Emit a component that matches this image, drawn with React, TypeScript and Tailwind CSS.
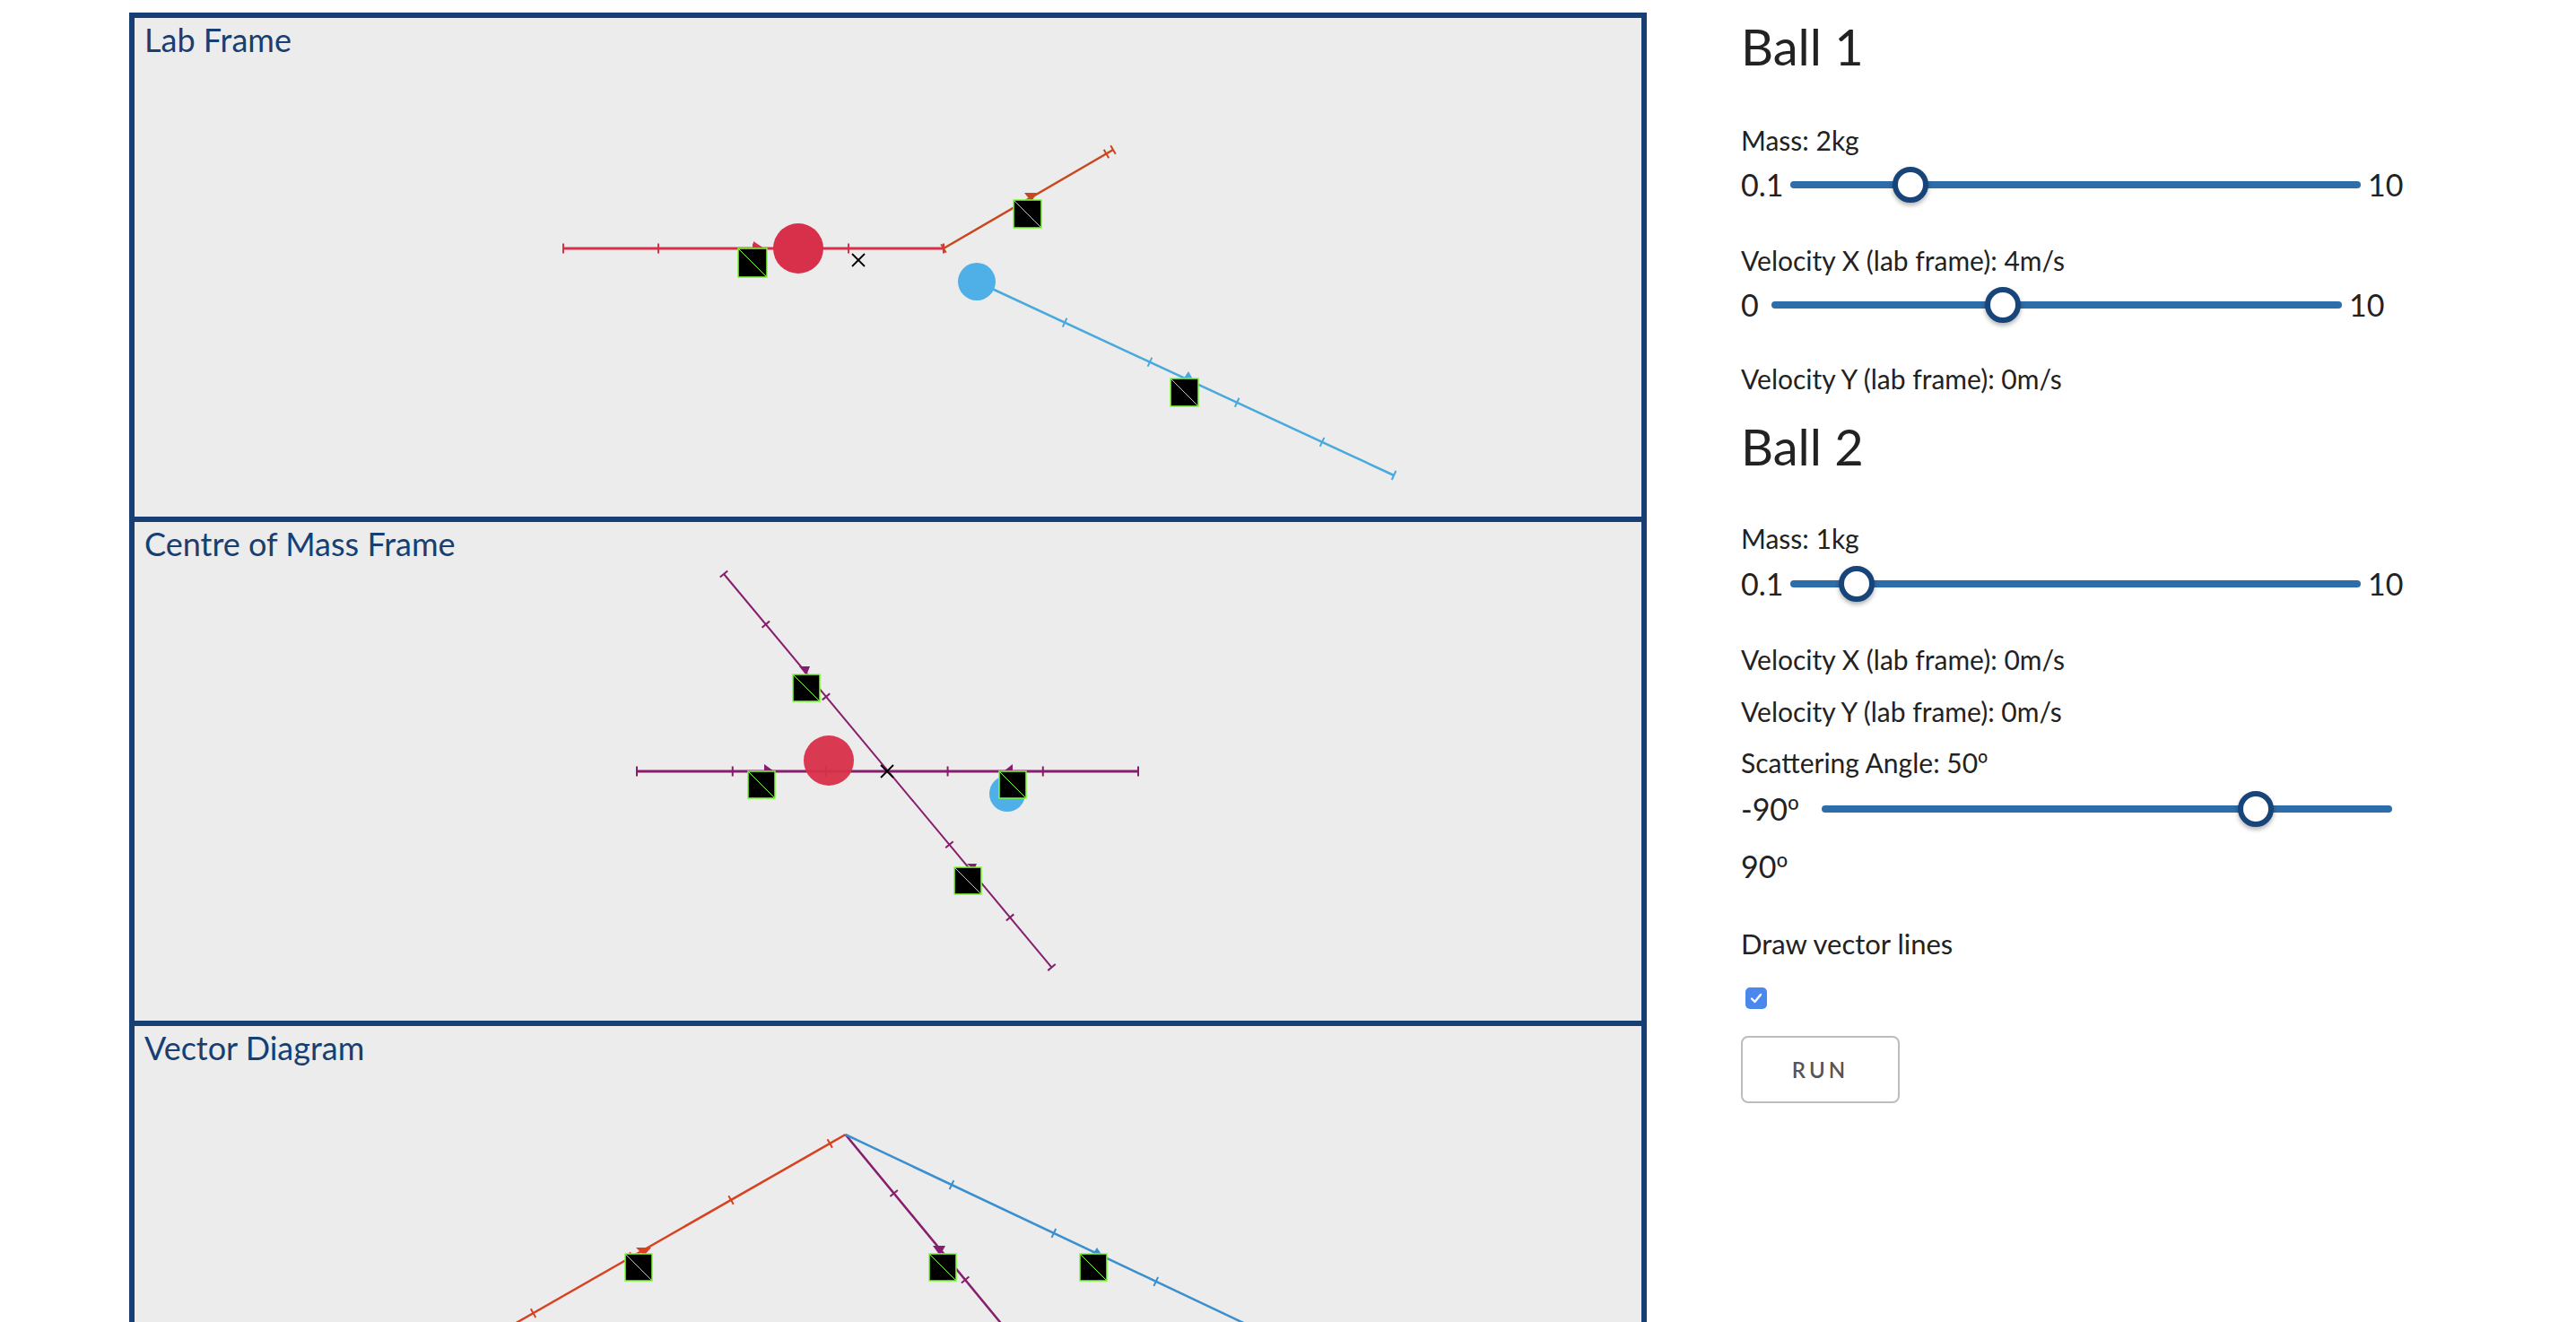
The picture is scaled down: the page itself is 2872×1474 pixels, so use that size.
import React from "react";

type Pt = [number, number];

const RED = "#d8304a";
const ORANGE = "#c9471f";
const PURPLE = "#861d6d";
const SKY = "#4aa9dc";
const BLUE = "#3a8fd0";
const LIME = "#7cfc3a";

// line with perpendicular tick marks at given distances (px) from the start
function Vec({
  a,
  dir,
  len,
  ticks,
  color,
  width = 2.5,
}: {
  a: Pt;
  dir: Pt;
  len: number;
  ticks: number[];
  color: string;
  width?: number;
}) {
  const l = Math.hypot(dir[0], dir[1]);
  const ux = dir[0] / l;
  const uy = dir[1] / l;
  const h = 5.5;
  return (
    <g>
      <line
        x1={a[0]}
        y1={a[1]}
        x2={a[0] + ux * len}
        y2={a[1] + uy * len}
        stroke={color}
        strokeWidth={width}
      />
      {ticks.map((d, i) => {
        const px = a[0] + ux * d;
        const py = a[1] + uy * d;
        return (
          <line
            key={i}
            x1={px - uy * h}
            y1={py + ux * h}
            x2={px + uy * h}
            y2={py - ux * h}
            stroke={color}
            strokeWidth={2}
          />
        );
      })}
    </g>
  );
}

function Seg({ a, b, ts, color, width }: { a: Pt; b: Pt; ts: number[]; color: string; width?: number }) {
  const dir: Pt = [b[0] - a[0], b[1] - a[1]];
  const len = Math.hypot(dir[0], dir[1]);
  return <Vec a={a} dir={dir} len={len} ticks={ts.map((t) => t * len)} color={color} width={width} />;
}

function Sq({ x, y, s = 31 }: { x: number; y: number; s?: number }) {
  return (
    <g>
      <rect x={x} y={y} width={s} height={s} fill="#000" stroke={LIME} strokeWidth={1.5} />
      <line x1={x} y1={y} x2={x + s} y2={y + s} stroke={LIME} strokeWidth={1} />
    </g>
  );
}

function Cross({ x, y, s = 6 }: { x: number; y: number; s?: number }) {
  return (
    <g stroke="#000" strokeWidth={1.8}>
      <line x1={x - s} y1={y - s} x2={x + s} y2={y + s} />
      <line x1={x - s} y1={y + s} x2={x + s} y2={y - s} />
    </g>
  );
}

function Tri({ p, color }: { p: string; color: string }) {
  return <polygon points={p} fill={color} />;
}

function LabDrawing() {
  return (
    <>
      <Seg a={[478, 257]} b={[902, 257]} ts={[0, 0.25, 0.5, 0.75, 1]} color={RED} width={3} />
      <Seg a={[902, 257]} b={[1091, 147]} ts={[0, 0.96, 1]} color={ORANGE} />
      <Seg a={[939, 294]} b={[1404, 510]} ts={[0.211, 0.415, 0.624, 0.828, 1]} color={SKY} />
      <circle cx={740} cy={257} r={28} fill={RED} />
      <circle cx={939} cy={294} r={21} fill="#4fb0e8" />
      <Tri p="690,249 702,257 690,257" color={RED} />
      <Tri p="992,195 1006,195 1000,205" color={ORANGE} />
      <Tri p="1169,403 1180,403 1175,394" color={SKY} />
      <Sq x={673} y={257} s={32} />
      <Sq x={980} y={203} />
      <Sq x={1155} y={402} />
      <Cross x={807} y={270} s={7} />
    </>
  );
}

function ComDrawing() {
  return (
    <>
      <Seg a={[560, 278]} b={[1119, 278]} ts={[0, 0.191, 0.377, 0.62, 0.81, 1]} color={PURPLE} width={3} />
      <Seg a={[657, 58]} b={[1022.5, 496.6]} ts={[0, 0.128, 0.312, 0.688, 0.873, 1]} color={PURPLE} width={2} />
      <circle cx={774} cy={266} r={28} fill={RED} fillOpacity={0.95} />
      <circle cx={973} cy={303} r={20} fill="#4fb0e8" />
      <Tri p="741,161 753,161 749,171" color={PURPLE} />
      <Tri p="702,270 713,278 702,278" color={PURPLE} />
      <Tri p="979,270 979,278 969,278" color={PURPLE} />
      <Tri p="928,381 939,381 936,388" color={PURPLE} />
      <Sq x={684} y={278} s={30} />
      <Sq x={964} y={278} s={30} />
      <Sq x={734} y={170} s={30} />
      <Sq x={914} y={385} s={30} />
      <Cross x={839} y={278} s={7} />
    </>
  );
}

function VectorDrawing() {
  const A: Pt = [792.6, 121];
  return (
    <>
      <Vec a={A} dir={[-363.6, 208]} len={700} ticks={[20, 147, 274, 401, 528, 655]} color="#d9401f" />
      <Vec a={A} dir={[171.4, 208]} len={600} ticks={[85, 210, 335, 460, 585]} color={PURPLE} />
      <Vec a={A} dir={[439.4, 208]} len={700} ticks={[131, 257, 383, 509, 635]} color={BLUE} />
      <Tri p="559,247 576,247 568,256" color="#d9401f" />
      <Tri p="890,245 904,245 898,256" color={PURPLE} />
      <Tri p="1067,256 1079,256 1073,247" color={BLUE} />
      <Sq x={547} y={254} s={30} />
      <Sq x={886} y={254} s={30} />
      <Sq x={1054} y={254} s={30} />
    </>
  );
}

function Frame({ title, children }: { title: string; children: React.ReactNode }) {
  return (
    <div className="relative h-[562px] border-t-[6px] border-[#173f73] bg-[#ebeceb]">
      <svg className="absolute inset-0" width={1680} height={556} viewBox="0 0 1680 556">
        {children}
      </svg>
      <div className="relative px-[11px] pt-[6px] text-[36px] leading-[36px] text-[#173f73]">{title}</div>
    </div>
  );
}

// ordinal sign drawn in Noto Sans, which has the underlined form
function Deg() {
  return <span className="font-['Noto_Sans',sans-serif]">º</span>;
}

function Slider({
  min,
  max,
  value,
  minLabel,
  maxLabel,
  labelW,
}: {
  min: number;
  max: number;
  value: number;
  minLabel: React.ReactNode;
  maxLabel?: string;
  labelW: string;
}) {
  const frac = (value - min) / (max - min);
  return (
    <div className="flex h-[40px] items-center whitespace-nowrap text-[34px] leading-[34px] text-[#222]">
      <span className={labelW}>{minLabel}</span>
      <div className="relative h-[40px] w-[636px]">
        <div className="absolute left-0 right-0 top-[16px] h-[8px] rounded-full bg-[#2d6da9]" />
        <div
          className="absolute top-0 h-[40px] w-[40px] rounded-full border-[6px] border-[#174479] bg-white shadow-[0_3px_5px_rgba(0,0,0,0.3)]"
          style={{ left: frac * 596 }}
        />
      </div>
      {maxLabel && <span className="ml-[8px]">{maxLabel}</span>}
    </div>
  );
}

function Label({ children, className = "" }: { children: React.ReactNode; className?: string }) {
  return <div className={`text-[30px] leading-[30px] text-[#222] ${className}`}>{children}</div>;
}

export default function App() {
  return (
    <div className="flex min-h-screen bg-white font-[Lato,'Noto_Sans',sans-serif]">
      <div className="ml-[144px] mt-[14px] w-[1692px] shrink-0 self-start border-x-[6px] border-[#173f73]">
        <Frame title="Lab Frame">
          <LabDrawing />
        </Frame>
        <Frame title="Centre of Mass Frame">
          <ComDrawing />
        </Frame>
        <Frame title="Vector Diagram">
          <VectorDrawing />
        </Frame>
      </div>

      <div className="ml-[105px] flex flex-col pt-[24px]">
        <h2 className="text-[56px] leading-[56px] text-[#222]">Ball 1</h2>
        <Label className="mt-[61px]">Mass: 2kg</Label>
        <div className="mt-[15px]">
          <Slider min={0.1} max={10} value={2} minLabel="0.1" maxLabel="10" labelW="w-[55px]" />
        </div>
        <Label className="mt-[49px]">Velocity X (lab frame): 4m/s</Label>
        <div className="mt-[15px]">
          <Slider min={0} max={10} value={4} minLabel="0" maxLabel="10" labelW="w-[34px]" />
        </div>
        <Label className="mt-[47px]">Velocity Y (lab frame): 0m/s</Label>

        <h2 className="mt-[33px] text-[56px] leading-[56px] text-[#222]">Ball 2</h2>
        <Label className="mt-[59px]">Mass: 1kg</Label>
        <div className="mt-[16px]">
          <Slider min={0.1} max={10} value={1} minLabel="0.1" maxLabel="10" labelW="w-[55px]" />
        </div>
        <Label className="mt-[49px]">Velocity X (lab frame): 0m/s</Label>
        <Label className="mt-[28px]">Velocity Y (lab frame): 0m/s</Label>
        <Label className="mt-[27px]">
          Scattering Angle: 50<Deg />
        </Label>
        <div className="mt-[16px]">
          <Slider
            min={-90}
            max={90}
            value={50}
            minLabel={
              <>
                -90<Deg />
              </>
            }
            labelW="w-[90px]"
          />
        </div>
        <div className="mt-[27px] text-[34px] leading-[34px] text-[#222]">
          90<Deg />
        </div>

        <div className="mt-[54px] text-[31px] leading-[31px] text-[#222]">Draw vector lines</div>
        <div className="ml-[5px] mt-[33px] flex h-[24px] w-[24px] items-center justify-center rounded-[5px] bg-[#4a88ee]">
          <svg width="16" height="16" viewBox="0 0 16 16" fill="none">
            <path d="M3 8.5 L6.5 12 L13 4" stroke="#fff" strokeWidth="2.4" strokeLinecap="round" strokeLinejoin="round" />
          </svg>
        </div>
        <button className="mt-[30px] flex h-[75px] w-[177px] items-center justify-center rounded-[8px] border-2 border-[#bdbdbd] bg-white text-[24px] font-semibold tracking-[4px] text-[#555]">
          RUN
        </button>
      </div>
    </div>
  );
}
